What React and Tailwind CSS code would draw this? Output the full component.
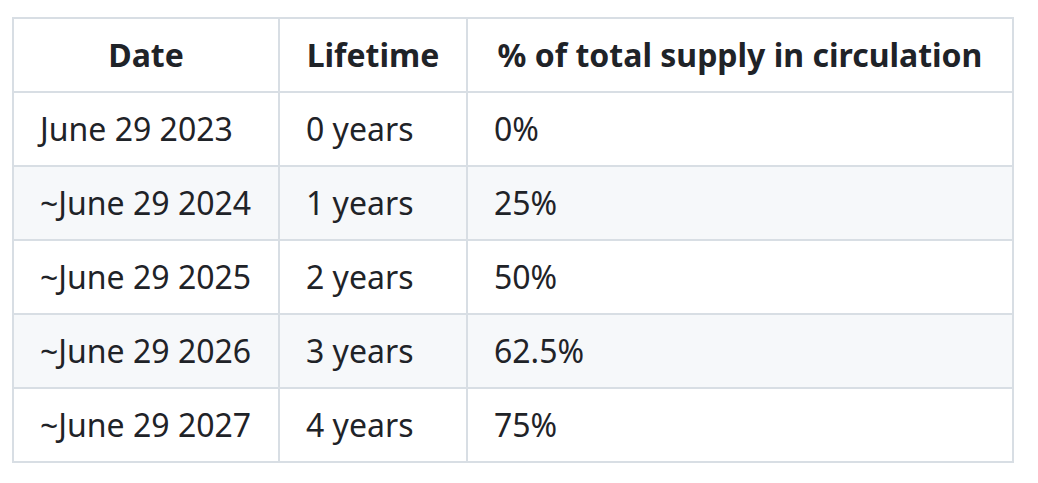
const rows = [
  ['June 29 2023', '0 years', '0%'],
  ['~June 29 2024', '1 years', '25%'],
  ['~June 29 2025', '2 years', '50%'],
  ['~June 29 2026', '3 years', '62.5%'],
  ['~June 29 2027', '4 years', '75%'],
]

export default function App() {
  return (
    <div className="min-h-[483px] bg-white pl-3 pt-[17px] text-[#1f2328]" style={{ fontFamily: '"Noto Sans", "Open Sans", sans-serif' }}>
      <table className="table-fixed border-collapse w-[1000px] text-[32px] leading-[48px]">
        <colgroup>
          <col className="w-[266px]" />
          <col className="w-[188px]" />
          <col className="w-[546px]" />
        </colgroup>
        <thead>
          <tr className="bg-white">
            <th className="border-2 border-[#d8dee4] px-[26px] py-3 font-bold text-center">Date</th>
            <th className="border-2 border-[#d8dee4] px-[26px] py-3 font-bold text-center">Lifetime</th>
            <th className="border-2 border-[#d8dee4] px-[26px] py-3 font-bold text-center whitespace-nowrap">% of total supply in circulation</th>
          </tr>
        </thead>
        <tbody>
          {rows.map((r, i) => (
            <tr key={r[0]} className={i % 2 === 1 ? 'bg-[#f6f8fa]' : 'bg-white'}>
              {r.map((c, j) => (
                <td key={j} className="border-2 border-[#d8dee4] px-[26px] py-3 text-left whitespace-nowrap">{c}</td>
              ))}
            </tr>
          ))}
        </tbody>
      </table>
    </div>
  )
}
